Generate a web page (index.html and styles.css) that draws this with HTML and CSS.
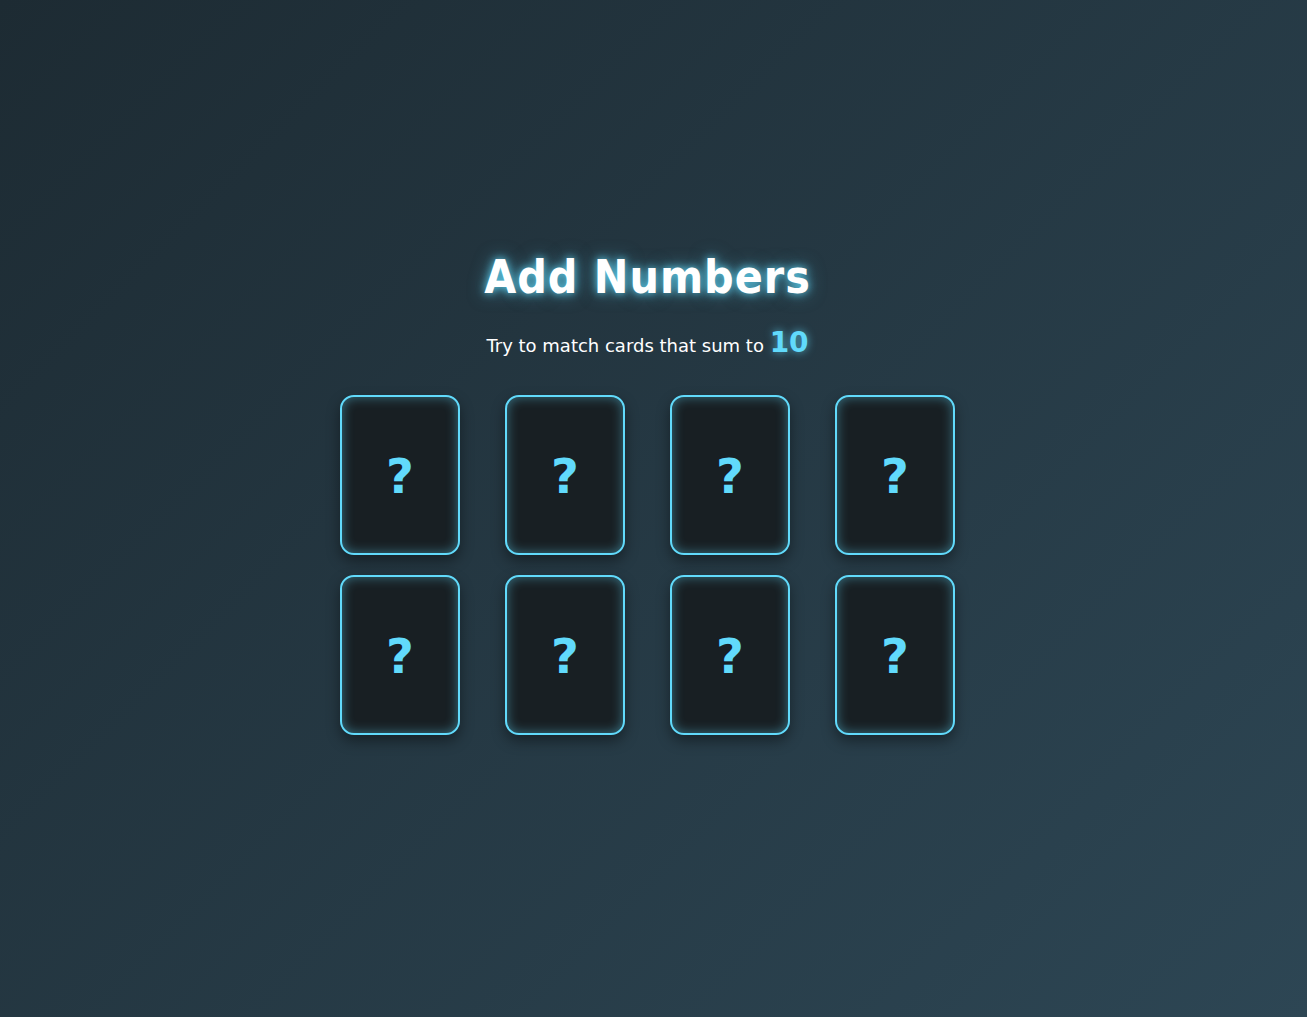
FILE: index.html
```html
<!DOCTYPE html>
<html lang="en">
<head>
<meta charset="utf-8">
<title>Add Numbers</title>
<link rel="stylesheet" href="styles.css">
</head>
<body>
<main class="game">
  <h1 class="title">Add Numbers</h1>
  <p class="subtitle">Try to match cards that sum to <span class="target">10</span></p>
  <div class="board">
    <div class="card"><span class="mark">?</span></div>
    <div class="card"><span class="mark">?</span></div>
    <div class="card"><span class="mark">?</span></div>
    <div class="card"><span class="mark">?</span></div>
    <div class="card"><span class="mark">?</span></div>
    <div class="card"><span class="mark">?</span></div>
    <div class="card"><span class="mark">?</span></div>
    <div class="card"><span class="mark">?</span></div>
  </div>
</main>
</body>
</html>
```

FILE: styles.css
```css
html, body {
  margin: 0;
  padding: 0;
  height: 100%;
}

body {
  background: linear-gradient(135deg, #1d2b33 0%, #2d4654 100%);
  font-family: "DejaVu Sans", Verdana, sans-serif;
  color: #ffffff;
}

.game {
  min-height: 100%;
  display: flex;
  flex-direction: column;
  align-items: center;
  justify-content: center;
  padding-right: 12px;
  padding-bottom: 32px;
  box-sizing: border-box;
}

.title {
  margin: 0;
  font-family: "DejaVu Sans Condensed", "DejaVu Sans", sans-serif;
  font-size: 46px;
  letter-spacing: 1px;
  font-weight: bold;
  color: #ffffff;
  text-shadow: 0 0 8px rgba(97, 218, 251, 0.9), 0 0 18px rgba(97, 218, 251, 0.5);
}

.subtitle {
  margin: 22px 0 36px;
  font-size: 18px;
  color: #ffffff;
}

.target {
  font-size: 28px;
  font-weight: bold;
  color: #61dafb;
  text-shadow: 0 0 8px rgba(97, 218, 251, 0.7);
}

.board {
  display: grid;
  grid-template-columns: repeat(4, 120px);
  grid-auto-rows: 160px;
  column-gap: 45px;
  row-gap: 20px;
}

.card {
  box-sizing: border-box;
  border: 2px solid #61dafb;
  border-radius: 14px;
  background: #181f23;
  box-shadow: inset 0 0 12px rgba(97, 218, 251, 0.45), 0 6px 14px rgba(0, 0, 0, 0.4);
  display: flex;
  align-items: center;
  justify-content: center;
}

.mark {
  font-size: 48px;
  font-weight: bold;
  color: #61dafb;
  padding-top: 1px;
}
```
